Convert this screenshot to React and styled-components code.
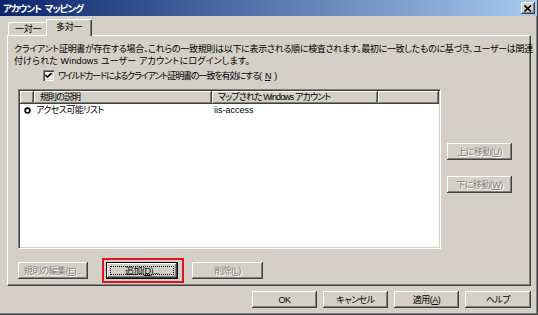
import React from 'react';
import styled, { createGlobalStyle, css } from 'styled-components';

const Global = createGlobalStyle`
  html, body { margin: 0; padding: 0; background: #D4D0C8; }
  body {
    font-family: "Liberation Sans", "Noto Sans CJK JP", sans-serif;
    font-size: 9px;
    color: #000;
    font-feature-settings: "palt";
  }
  * { box-sizing: border-box; }
`;

const Window = styled.div`
  width: 538px;
  height: 315px;
  background: #D4D0C8;
  display: flex;
  flex-direction: column;
  overflow: hidden;
  border-right: 1px solid #404040;
  border-bottom: 1px solid #404040;
  box-shadow: inset -1px -1px #808080;
`;

const TitleBar = styled.div`
  height: 16px;
  flex: none;
  display: flex;
  align-items: center;
  justify-content: space-between;
  padding: 0 2px 0 3px;
  background: linear-gradient(to right, #0A246A, #A6CAF0);
`;

const Title = styled.span`
  color: #fff;
  font-weight: bold;
  font-size: 9.5px;
  letter-spacing: -1.1px;
  word-spacing: 3px;
  line-height: 16px;
  font-family: "Noto Sans CJK JP", sans-serif;
  white-space: pre;
`;

const raised = css`
  box-shadow: inset -1px -1px #404040, inset 1px 1px #fff, inset -2px -2px #808080, inset 2px 2px #D4D0C8;
`;

const CloseBtn = styled.div`
  width: 14px;
  height: 12px;
  background: #D4D0C8;
  ${raised};
  display: flex;
  align-items: center;
  justify-content: center;
`;

const Body = styled.div`
  flex: 1;
  display: flex;
  flex-direction: column;
  padding: 4px 6px 0 7px;
`;

const TabRow = styled.div`
  height: 15px;
  display: flex;
  align-items: flex-end;
  padding-left: 1px;
  position: relative;
  z-index: 1;
`;

const Tab = styled.div`
  height: ${p => (p.$active ? 17 : 13)}px;
  padding: 0 ${p => (p.$active ? 9 : 6)}px;
  margin: ${p => (p.$active ? '0 -2px -1px -2px' : '0')};
  background: #D4D0C8;
  border-top: 1px solid #fff;
  border-left: 1px solid #fff;
  border-right: 1px solid #404040;
  border-radius: 2px 2px 0 0;
  box-shadow: inset -1px 0 #808080;
  display: flex;
  align-items: ${p => (p.$active ? 'flex-start' : 'center')};
  padding-top: ${p => (p.$active ? 2 : 0)}px;
  line-height: 11px;
  letter-spacing: -0.3px;
  white-space: nowrap;
  position: relative;
  z-index: ${p => (p.$active ? 2 : 1)};
`;

const Panel = styled.div`
  height: 251px;
  flex: none;
  border-top: 1px solid #fff;
  border-left: 1px solid #fff;
  border-right: 1px solid #404040;
  border-bottom: 1px solid #404040;
  box-shadow: inset -1px -1px #808080;
  display: flex;
  flex-direction: column;
  padding-top: 7px;
`;

const Desc = styled.p`
  margin: 0 0 0 6px;
  line-height: 12px;
  white-space: nowrap;
`;

const DescLine = styled.span`
  display: block;
  letter-spacing: ${p => p.$ls}px;
`;

const CheckRow = styled.label`
  display: flex;
  align-items: center;
  gap: 4px;
  margin: 2px 0 0 35px;
  height: 13px;
  letter-spacing: -1.1px;
  white-space: nowrap;
`;

const CheckBox = styled.span`
  width: 11px;
  height: 11px;
  flex: none;
  background: #fff;
  box-shadow: inset 1px 1px #808080, inset 2px 2px #404040, inset -1px -1px #fff, inset -2px -2px #D4D0C8;
  display: flex;
  align-items: center;
  justify-content: center;
`;

const MainRow = styled.div`
  display: flex;
  margin: 7px 0 0 10px;
  gap: 6px;
`;

const ListView = styled.div`
  width: 423px;
  height: 160px;
  background: #fff;
  border-top: 1px solid #808080;
  border-left: 1px solid #808080;
  border-right: 1px solid #fff;
  border-bottom: 1px solid #fff;
  box-shadow: inset 1px 1px #404040, inset -1px -1px #D4D0C8;
  padding: 1px;
  display: flex;
  flex-direction: column;
`;

const HeaderRow = styled.div`
  display: flex;
  height: 13px;
  flex: none;
`;

const HeaderCell = styled.div`
  width: ${p => p.$w}px;
  flex: ${p => (p.$grow ? 1 : 'none')};
  height: 13px;
  background: #D4D0C8;
  box-shadow: inset -1px -1px #404040, inset 1px 1px #fff, inset -2px -2px #808080;
  padding-left: 6px;
  line-height: 12px;
  letter-spacing: -0.9px;
  white-space: nowrap;
  overflow: hidden;
`;

const Row = styled.div`
  display: flex;
  height: 12px;
  line-height: 12px;
  white-space: nowrap;
`;

const Cell = styled.div`
  width: ${p => p.$w}px;
  flex: none;
  padding-left: ${p => p.$pl || 0}px;
  display: flex;
  align-items: center;
  letter-spacing: ${p => (p.$latin ? '0' : '-0.6px')};
`;

const SideCol = styled.div`
  display: flex;
  flex-direction: column;
  gap: 16px;
  padding-top: 54px;
`;

const Button = styled.div`
  width: ${p => p.$w}px;
  height: 17px;
  flex: none;
  background: #D4D0C8;
  display: flex;
  align-items: center;
  justify-content: center;
  white-space: nowrap;
  line-height: 12px;
  letter-spacing: -0.5px;
  position: relative;
  ${raised};
  ${p => p.$disabled && css`
    color: #808080;
    text-shadow: 1px 1px #fff;
  `}
  ${p => p.$default && css`
    border: 1px solid #000;
  `}
`;

const FocusRect = styled.span`
  position: absolute;
  inset: 3px;
  border: 1px dotted #000;
  pointer-events: none;
`;

const BottomRow = styled.div`
  display: flex;
  align-items: center;
  margin: 9px 0 0 10px;
`;

const RedFrame = styled.div`
  border: 2px solid #E0141E;
  padding: 2px 4px 2px 2px;
  margin: 0 8px 0 14px;
`;

const Footer = styled.div`
  display: flex;
  justify-content: flex-end;
  gap: 6px;
  padding-top: 5px;
`;

const Ring = () => (
  <svg width="7" height="7" viewBox="0 0 7 7">
    <circle cx="3.5" cy="3.5" r="2.4" fill="none" stroke="#000" strokeWidth="1.6" />
  </svg>
);

export default function App() {
  return (
    <>
      <Global />
      <Window>
        <TitleBar>
          <Title>アカウント マッピング</Title>
          <CloseBtn>
            <svg width="8" height="7" viewBox="0 0 8 7">
              <path d="M0.5 0.5 L7 6.5 M7 0.5 L0.5 6.5" stroke="#000" strokeWidth="1.6" />
            </svg>
          </CloseBtn>
        </TitleBar>
        <Body>
          <TabRow>
            <Tab>一対一</Tab>
            <Tab $active>多対一</Tab>
          </TabRow>
          <Panel>
            <Desc>
              <DescLine $ls={-0.3}>
                クライアント証明書が存在する場合、これらの一致規則は以下に表示される順に検査されます。最初に一致したものに基づき、ユーザーは関連
              </DescLine>
              <DescLine $ls={0.15}>
                付けられた Windows ユーザー アカウントにログインします。
              </DescLine>
            </Desc>
            <CheckRow>
              <CheckBox>
                <svg width="7" height="7" viewBox="0 0 7 7">
                  <path d="M0.5 3 L2.5 5 L6.5 1" fill="none" stroke="#000" strokeWidth="1.6" />
                </svg>
              </CheckBox>
              ワイルドカードによるクライアント証明書の一致を有効にする(<u>N</u>)
            </CheckRow>
            <MainRow>
              <ListView>
                <HeaderRow>
                  <HeaderCell $w={14} />
                  <HeaderCell $w={178}>規則の説明</HeaderCell>
                  <HeaderCell $w={166}>マップされた Windows アカウント</HeaderCell>
                  <HeaderCell $grow />
                </HeaderRow>
                <Row>
                  <Cell $w={16} $pl={4}><Ring /></Cell>
                  <Cell $w={176}>アクセス可能リスト</Cell>
                  <Cell $w={166} $pl={2} $latin>iis-access</Cell>
                </Row>
              </ListView>
              <SideCol>
                <Button $w={65} $disabled>上に移動(<u>U</u>)</Button>
                <Button $w={65} $disabled>下に移動(<u>W</u>)</Button>
              </SideCol>
            </MainRow>
            <BottomRow>
              <Button $w={70} $disabled>規則の編集(<u>E</u>)...</Button>
              <RedFrame>
                <Button $w={72} $default>
                  追加(<u>D</u>)...
                  <FocusRect />
                </Button>
              </RedFrame>
              <Button $w={71} $disabled>削除(<u>L</u>)</Button>
            </BottomRow>
          </Panel>
          <Footer>
            <Button $w={65}>OK</Button>
            <Button $w={65}>キャンセル</Button>
            <Button $w={65}>適用(<u>A</u>)</Button>
            <Button $w={66}>ヘルプ</Button>
          </Footer>
        </Body>
      </Window>
    </>
  );
}
